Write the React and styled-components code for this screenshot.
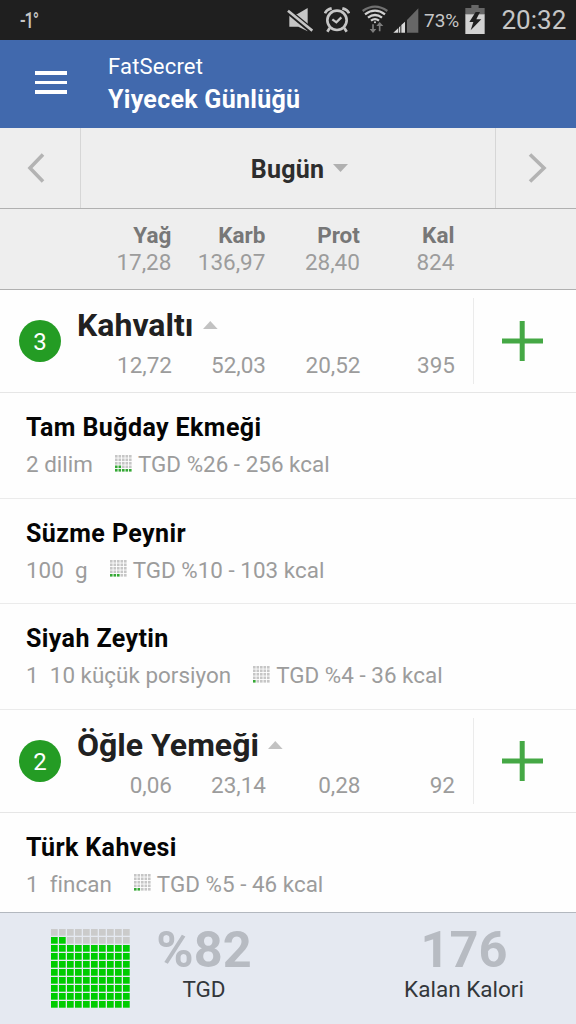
import React from 'react';
import styled, { createGlobalStyle } from 'styled-components';

const GlobalStyle = createGlobalStyle`
  * {
    box-sizing: border-box;
  }
  body {
    margin: 0;
    background: #fefefe;
    font-family: Roboto, "Liberation Sans", sans-serif;
  }
`

const Screen = styled.div`
  display: flex;
  flex-direction: column;
  width: 576px;
  height: 1024px;
  overflow: hidden;
  background: #fefefe;
`

/* status bar */

const StatusBar = styled.div`
  display: flex;
  flex: none;
  align-items: flex-start;
  height: 40px;
  padding-left: 20px;
  background: #1f1f1f;
  color: #c6c6c6;

  > svg {
    flex: none;
    margin-top: 4px;
  }
`

const StatusIcons = styled.div`
  display: flex;
  gap: 11.5px;
  padding-top: 4px;

  > svg:last-child {
    margin-left: -6px;
  }
`

const Temperature = styled.span`
  width: 266.5px;
  font-size: 22px;
  font-weight: 500;
  line-height: 41px;
  letter-spacing: -1.5px;
  transform: scaleX(.75);
  transform-origin: left;
`

const Percent = styled.span`
  width: 41px;
  margin-left: 5px;
  font-size: 19px;
  line-height: 41px;
`

const Clock = styled.span`
  margin-left: 16.5px;
  font-size: 26px;
  line-height: 40px;
`

/* header */

const Header = styled.header`
  display: flex;
  flex: none;
  height: 88px;
  background: #4169ad;
  color: #fff;
`

const MenuButton = styled.div`
  display: flex;
  flex-direction: column;
  gap: 6px;
  width: 108px;
  padding: 31px 0 0 34.5px;

  > i {
    width: 32.5px;
    height: 3.7px;
    background: #fff;
  }
`

const Titles = styled.div`
  padding-top: 10px;
  line-height: 33px;
  white-space: nowrap;
`

const AppName = styled.div`
  font-size: 22px;
  letter-spacing: .2px;
`

const PageTitle = styled.div`
  font-size: 25px;
  font-weight: 700;
  letter-spacing: .28px;
`

/* day picker */

const DayBar = styled.div`
  display: grid;
  flex: none;
  grid-template-columns: 81px 1fr 81px;
  height: 81px;
  background: #eee;
  border-bottom: 1px solid #b0b0b0;
`

const DayArrow = styled.div`
  display: flex;
  align-items: center;
  justify-content: ${props => props.$next ? 'flex-end' : 'flex-start'};
  padding: 0 ${props => props.$next ? 29 : 26}px 1px;
  border: 0 solid #d6d6d6;
  border-width: ${props => props.$next ? '0 0 0 1px' : '0 1px 0 0'};
`

const Day = styled.div`
  display: flex;
  align-items: center;
  justify-content: center;
  gap: 9px;
  padding: 2px 0 0 23px;
  color: #2d2d2d;
  font-size: 25px;
  font-weight: 700;
  letter-spacing: .2px;

  > svg {
    margin-bottom: 3px;
  }
`

/* nutrient columns */

const Columns = styled.div`
  display: grid;
  grid-template-columns: ${props => props.$first}px 94px 94.5px 94.5px;
  text-align: right;
  color: #9c9c9c;
  font-size: 22.5px;
  line-height: ${props => props.$line}px;
`

const Totals = styled.div`
  flex: none;
  height: 81px;
  padding-top: 12px;
  background: #eee;
  border-bottom: 1px solid #b0b0b0;
`

const ColumnName = styled.span`
  margin-bottom: -1px;
  color: #777;
  font-size: 22.5px;
  font-weight: 700;
`

/* meals */

const MealList = styled.main`
  flex: 1;
  min-height: 0;
  overflow: hidden;
`

const MealHeader = styled.div`
  display: grid;
  grid-template-columns: 77px 396px 1fr;
  height: 103px;
  border-bottom: 1px solid #e6e6e6;
`

const Count = styled.div`
  width: 42px;
  height: 42px;
  margin: 30px 0 0 19px;
  border-radius: 50%;
  background: #249c24;
  color: #fff;
  text-align: center;
  font-size: 24px;
  line-height: 44px;
`

const MealBody = styled.div`
  padding-top: 15px;
`

const MealName = styled.div`
  display: flex;
  align-items: center;
  gap: 9px;
  color: #212121;
  font-size: 32px;
  font-weight: 700;
  line-height: 40px;
  white-space: nowrap;
`

const AddButton = styled.div`
  height: 86px;
  margin-top: 8px;
  padding: 23px 0 0 28px;
  border-left: 1px solid #ebebeb;
`

const FoodRow = styled.div`
  height: 105.67px;
  padding: 16px 0 0 26px;
  border-bottom: 1px solid #ebebeb;
  white-space: pre;
`

const FoodName = styled.div`
  color: #050505;
  font-size: 25px;
  font-weight: 700;
  line-height: 38px;
  letter-spacing: .4px;
`

const FoodInfo = styled.div`
  display: flex;
  align-items: center;
  color: #9c9c9c;
  font-size: 22.4px;
  line-height: 34px;
  letter-spacing: .03px;

  > svg {
    flex: none;
    margin: 0 6px 2px 22px;
  }
`

/* footer */

const Footer = styled.footer`
  display: flex;
  flex: none;
  height: 112px;
  border-top: 1px solid #b3b8bf;
  background: #e5e9f1;

  > svg {
    flex: none;
    margin: 16px 0 0 51px;
  }
`

const Stat = styled.div`
  width: ${props => props.$width}px;
  margin-left: ${props => props.$left}px;
  padding-top: 7px;
  text-align: center;
  color: #33373b;
  font-size: 22.5px;
  line-height: 18px;
  white-space: nowrap;

  > strong {
    display: block;
    color: #b7bbc2;
    font-size: 50.5px;
    line-height: 60px;
  }
`

const MuteIcon = () => (
  <svg width="26" height="30" viewBox="50 12 78 90">
    <path d="M57 43H80L112 24V94L84 80H57Z" fill="#c6c6c6" />
    <path d="M48 29L130 97" stroke="#1f1f1f" strokeWidth="17" />
    <path d="M53 32L126 92" stroke="#c6c6c6" strokeWidth="8" />
  </svg>
)

const AlarmIcon = () => (
  <svg width="26" height="30" viewBox="165 12 78 90" fill="none" stroke="#c6c6c6">
    <circle cx="204" cy="61" r="29" strokeWidth="8" />
    <path d="M190 58L202 67L217 52" strokeWidth="7" />
    <path d="M168 40Q172 29 188 25M220 25Q236 29 240 40" strokeWidth="8" />
    <path d="M182 84L175 95M226 84L233 95" strokeWidth="8" />
  </svg>
)

const WifiIcon = () => (
  <svg width="26" height="30" viewBox="276 12 78 90" fill="none" stroke="#d2d2d2" strokeWidth="7">
    <path d="M278 33Q315 7 352 33" stroke="#707070" />
    <path d="M285 43Q315 21 345 43" />
    <path d="M294 53Q315 37 336 53" />
    <path d="M303 62Q315 53 327 62" />
    <circle cx="315" cy="67" r="3" fill="#d2d2d2" stroke="none" />
    <path d="M309 73V90M329 94V74" stroke="#7d7d7d" strokeWidth="5" />
    <path d="M299 87H319L309 99ZM319 78H340L329 66Z" fill="#7d7d7d" stroke="none" />
  </svg>
)

const SignalIcon = () => (
  <svg width="26" height="30" viewBox="372 12 78 90">
    <path d="M414 60L448 25V98H414Z" fill="#676767" />
    <path d="M373 98L388 84V98Z" fill="#d8d8d8" />
    <path d="M390 82L394 78V98H390ZM397 75L408 65V98H397Z" fill="#d8d8d8" />
  </svg>
)

const BatteryIcon = () => (
  <svg width="20" height="30" viewBox="592 12 60 90">
    <path d="M611 15H633V24H651V45H593V24H611Z" fill="#676767" />
    <path d="M593 43H651V102H593Z" fill="#d2d2d2" />
    <path d="M624 36L605 66H617L609 91L641 58H626L637 36Z" fill="#1f1f1f" />
  </svg>
)

const Chevron = ({ next }) => (
  <svg width="19" height="30" viewBox="0 0 19 30" fill="none" stroke="#b3b3b3" strokeWidth="3.6">
    <path d={next ? 'M2 1.5L16 15L2 28.5' : 'M17 1.5L4 15L17 28.5'} />
  </svg>
)

const Triangle = ({ up }) => (
  <svg width="15" height="8" viewBox="0 0 15 8">
    <path d={up ? 'M0 8L7.3 0L14.6 8Z' : 'M0 0H15L7.5 8Z'} fill={up ? '#c2c2c2' : '#b0b0b0'} />
  </svg>
)

const PlusIcon = () => (
  <svg width="41" height="40" viewBox="0 0 41 40" stroke="#45a845" strokeWidth="5">
    <path d="M0 20H41M20.2 0V40" />
  </svg>
)

// squares are filled from the bottom row up, left to right
const Squares = ({ count, size, pitch, cell, filled, on, off }) => (
  <svg width={size} height={size} viewBox={`0 0 ${size} ${size}`}>
    {Array.from({ length: count * count }, (_, i) => (
      <rect
        key={i}
        x={(i % count) * pitch}
        y={(count - 1 - Math.floor(i / count)) * pitch}
        width={cell}
        height={cell}
        fill={i < filled ? on : off}
      />
    ))}
  </svg>
)

const meals = [
  {
    name: 'Kahvaltı',
    values: ['12,72', '52,03', '20,52', '395'],
    count: 3,
    foods: [
      { name: 'Tam Buğday Ekmeği', amount: '2 dilim', rdi: 'TGD %26 - 256 kcal', filled: 7 },
      { name: 'Süzme Peynir', amount: '100  g', rdi: 'TGD %10 - 103 kcal', filled: 3 },
      { name: 'Siyah Zeytin', amount: '1  10 küçük porsiyon', rdi: 'TGD %4 - 36 kcal', filled: 1 },
    ],
  },
  {
    name: 'Öğle Yemeği',
    values: ['0,06', '23,14', '0,28', '92'],
    count: 2,
    foods: [
      { name: 'Türk Kahvesi', amount: '1  fincan', rdi: 'TGD %5 - 46 kcal', filled: 2 },
    ],
  },
]

const Meal = ({ meal }) => (
  <section>
    <MealHeader>
      <Count>{meal.count}</Count>
      <MealBody>
        <MealName>{meal.name}<Triangle up /></MealName>
        <Columns $first={95} $line={40}>
          {meal.values.map((value, i) => <span key={i}>{value}</span>)}
        </Columns>
      </MealBody>
      <AddButton><PlusIcon /></AddButton>
    </MealHeader>
    {meal.foods.map(food => (
      <FoodRow key={food.name}>
        <FoodName>{food.name}</FoodName>
        <FoodInfo>
          <span>{food.amount}</span>
          <Squares count={5} size={17} pitch={3.5} cell={2.6} filled={food.filled} on="#35a835" off="#c6c6c6" />
          <span>{food.rdi}</span>
        </FoodInfo>
      </FoodRow>
    ))}
  </section>
)

const App = () => {
  return (
    <Screen>
      <GlobalStyle />
      <StatusBar>
        <Temperature>-1°</Temperature>
        <StatusIcons>
          <MuteIcon />
          <AlarmIcon />
          <WifiIcon />
          <SignalIcon />
        </StatusIcons>
        <Percent>73%</Percent>
        <BatteryIcon />
        <Clock>20:32</Clock>
      </StatusBar>
      <Header>
        <MenuButton><i /><i /><i /></MenuButton>
        <Titles>
          <AppName>FatSecret</AppName>
          <PageTitle>Yiyecek Günlüğü</PageTitle>
        </Titles>
      </Header>
      <DayBar>
        <DayArrow><Chevron /></DayArrow>
        <Day>Bugün<Triangle /></Day>
        <DayArrow $next><Chevron next /></DayArrow>
      </DayBar>
      <Totals>
        <Columns $first={171.4} $line={28}>
          <ColumnName>Yağ</ColumnName>
          <ColumnName>Karb</ColumnName>
          <ColumnName>Prot</ColumnName>
          <ColumnName>Kal</ColumnName>
          <span>17,28</span>
          <span>136,97</span>
          <span>28,40</span>
          <span>824</span>
        </Columns>
      </Totals>
      <MealList>
        {meals.map(meal => <Meal key={meal.name} meal={meal} />)}
      </MealList>
      <Footer>
        <Squares count={10} size={79} pitch={8} cell={6.7} filled={82} on="#0c0" off="#cbcbcb" />
        <Stat $left={4} $width={140}><strong>%82</strong>TGD</Stat>
        <Stat $left={110} $width={160}><strong>176</strong>Kalan Kalori</Stat>
      </Footer>
    </Screen>
  )
}

export default App
